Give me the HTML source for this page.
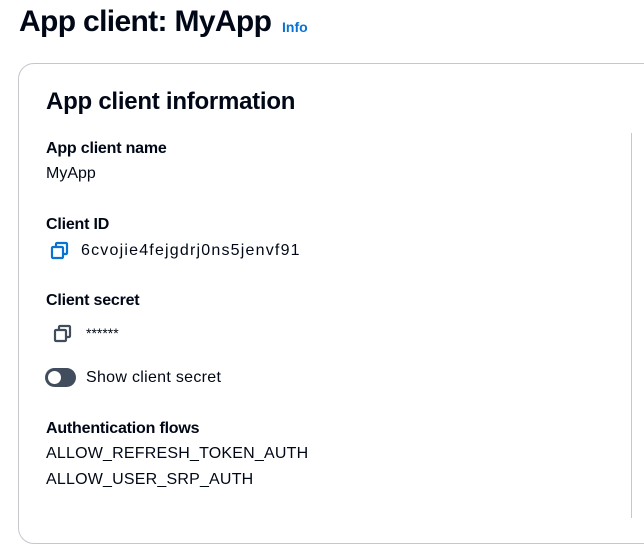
<!DOCTYPE html>
<html><head><meta charset="utf-8"><style>
*{margin:0;padding:0;box-sizing:border-box}
body{width:644px;height:560px;background:#fff;font-family:"Liberation Sans",sans-serif;color:#000716;position:relative;overflow:hidden}
.a{position:absolute;white-space:nowrap}
h1{position:absolute;left:19px;top:5px;font-size:30px;font-weight:bold;letter-spacing:-0.65px}
.info{position:absolute;left:282px;top:19px;font-size:14px;font-weight:bold;color:#0972d3}
.card{position:absolute;left:18px;top:63px;width:700px;height:481px;border:1.5px solid #c6c6cd;border-radius:16px}
.div{position:absolute;left:631px;top:133px;width:1px;height:385px;background:#c6c6cd}
h2{position:absolute;left:46px;top:88px;font-size:24px;font-weight:bold;letter-spacing:-0.25px}
.l{font-size:16px;font-weight:bold;letter-spacing:-0.2px}
.v{font-size:16px}
</style></head><body>
<h1>App client: MyApp</h1>
<div class="info">Info</div>
<div class="card"></div>
<div class="div"></div>
<h2>App client information</h2>
<div class="a l" style="left:46px;top:140px">App client name</div>
<div class="a v" style="left:46px;top:165px">MyApp</div>
<div class="a l" style="left:46px;top:216px">Client ID</div>
<svg class="a" style="left:50px;top:241px" width="20" height="20" viewBox="0 0 20 20"><rect x="6" y="2" width="11" height="11" rx="1" fill="none" stroke="#0972d3" stroke-width="2.2"/><rect x="2" y="6" width="11" height="11" rx="1" fill="#fff" stroke="#0972d3" stroke-width="2.2"/></svg>
<div class="a v" style="left:81px;top:242px;letter-spacing:1.2px">6cvojie4fejgdrj0ns5jenvf91</div>
<div class="a l" style="left:46px;top:292px">Client secret</div>
<svg class="a" style="left:53px;top:324px" width="20" height="20" viewBox="0 0 20 20"><rect x="6" y="2" width="11" height="11" rx="1" fill="none" stroke="#414d5c" stroke-width="2.2"/><rect x="2" y="6" width="11" height="11" rx="1" fill="#fff" stroke="#414d5c" stroke-width="2.2"/></svg>
<div class="a" style="left:86px;top:325px;font-size:14px">******</div>
<div class="a" style="left:45px;top:368px;width:31px;height:19px;border-radius:10px;background:#414d5c"><div style="position:absolute;left:3px;top:3px;width:13px;height:13px;border-radius:50%;background:#fff"></div></div>
<div class="a v" style="left:86px;top:369px;letter-spacing:0.3px">Show client secret</div>
<div class="a l" style="left:46px;top:420px">Authentication flows</div>
<div class="a v" style="left:46px;top:445px;letter-spacing:0.2px">ALLOW_REFRESH_TOKEN_AUTH</div>
<div class="a v" style="left:46px;top:471px;letter-spacing:0.2px">ALLOW_USER_SRP_AUTH</div>
</body></html>
